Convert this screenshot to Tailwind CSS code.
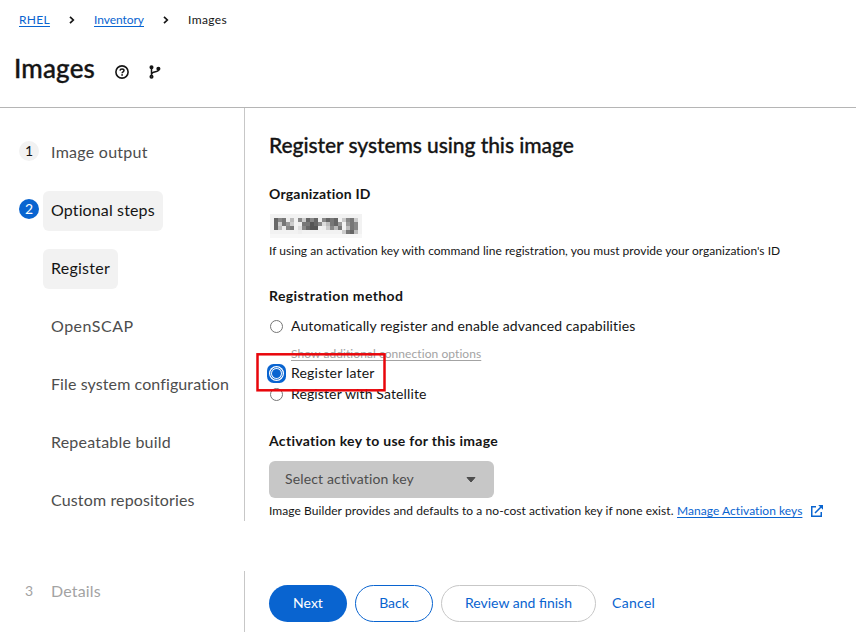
<!DOCTYPE html>
<html lang="en">
<head>
<meta charset="utf-8">
<title>Images</title>
<script src="https://cdn.jsdelivr.net/npm/@tailwindcss/browser@4"></script>
</head>
<body class="flex h-[632px] w-[856px] flex-col overflow-hidden bg-white font-['Lato','Open_Sans',sans-serif] text-[14px] text-[#151515]">
<header class="h-[108px] shrink-0 border-b border-[#b5b5b5]">
  <nav class="flex h-[40px] items-center pl-[19px] text-[12px] leading-[18px] whitespace-nowrap">
    <a class="w-[31px] tracking-[0.3px] text-[#0964d0] underline underline-offset-2">RHEL</a>
    <svg class="ml-[19px] h-[8px] w-[6px]" viewBox="0 0 6 8" fill="none" stroke="#151515" stroke-width="1.7"><path d="M1 .8 4.3 4 1 7.2"/></svg>
    <a class="ml-[19px] w-[50px] tracking-[-0.05px] text-[#0964d0] underline underline-offset-2">Inventory</a>
    <svg class="ml-[19px] h-[8px] w-[6px]" viewBox="0 0 6 8" fill="none" stroke="#151515" stroke-width="1.7"><path d="M1 .8 4.3 4 1 7.2"/></svg>
    <span class="ml-[19px] tracking-[0.4px]">Images</span>
  </nav>
  <div class="flex h-[60px] items-center pl-[14px]">
    <h1 class="w-[101px] pb-[4px] text-[26px] leading-[32px] font-medium tracking-[0.15px] [-webkit-text-stroke:0.35px_#151515]">Images</h1>
    <svg class="mt-[4px] h-[14px] w-[14px]" viewBox="0 0 14 14" fill="none" stroke="#151515"><circle cx="7" cy="7" r="6.1" stroke-width="1.6"/><path d="M5 5.6C5.1 4.5 5.9 4 7 4s2 .6 2 1.6C9 6.900 7.100 6.800 7.100 8.200" stroke-width="1.5"/><circle cx="7.100" cy="9.900" r=".9" fill="#151515" stroke="none"/></svg>
    <svg class="mt-[4px] ml-[20px] h-[14px] w-[12px]" viewBox="0 0 12 14" fill="none" stroke="#151515" stroke-width="1.5"><path d="M2.500 2.500v9M9.500 4v1c0 2.500-7 1-7 4.500"/><circle cx="2.500" cy="2.300" r="1.300" fill="#151515"/><circle cx="2.500" cy="11.700" r="1.300" fill="#555"/><circle cx="9.400" cy="3.800" r="1.300" fill="#151515"/></svg>
  </div>
</header>
<div class="flex h-[413px] shrink-0">
  <aside class="w-[245px] shrink-0 border-r border-[#c7c7c7] pt-[25px] pl-[19px] text-[16px] text-[#4d4d4d] whitespace-nowrap">
    <div class="mb-[18px] flex h-[40px]">
      <span class="mt-[8px] h-[20px] w-[20px] rounded-full bg-[#f2f2f2] text-center text-[14px] leading-[19px] text-[#151515]">1</span>
      <span class="ml-[4px] px-[8px] leading-[38px] tracking-[0.27px]">Image output</span>
    </div>
    <div class="mb-[18px] flex h-[40px]">
      <span class="mt-[8px] h-[20px] w-[20px] rounded-full bg-[#0964d0] text-center text-[14px] leading-[19px] text-white">2</span>
      <span class="ml-[4px] w-[120px] rounded-[6px] bg-[#f2f2f2] px-[8px] leading-[38px] tracking-[0.13px] text-[#151515]">Optional steps</span>
    </div>
    <div class="ml-[24px] flex flex-col items-start gap-[18px] leading-[38px]">
      <span class="h-[40px] w-[75px] rounded-[6px] bg-[#f2f2f2] px-[8px] tracking-[0.25px] text-[#151515]">Register</span>
      <span class="h-[40px] px-[8px] tracking-[0.5px]">OpenSCAP</span>
      <span class="h-[40px] px-[8px] tracking-[0.1px]">File system configuration</span>
      <span class="h-[40px] px-[8px] tracking-[0.2px]">Repeatable build</span>
      <span class="h-[40px] px-[8px] tracking-[0.14px]">Custom repositories</span>
    </div>
  </aside>
  <main class="flex flex-col pt-[24px] pl-[24px] whitespace-nowrap">
    <h2 class="h-[26px] text-[21px] leading-[25px] font-medium tracking-[-0.07px] [-webkit-text-stroke:0.3px_#151515]">Register systems using this image</h2>
    <h3 class="mt-[26px] h-[21px] leading-[19px] font-bold tracking-[0.2px]">Organization ID</h3>
    <svg id="mosaic" class="mt-[9px] ml-[1px] h-[24px] w-[92px]" viewBox="0 0 92 24" shape-rendering="crispEdges"><rect width="92" height="24" fill="#f7f7f7"/><rect width="92" height="20" fill="#f2f2f2"/></svg>
    <p class="mt-[4px] h-[18px] text-[12px] leading-[18px] tracking-[0.025px]">If using an activation key with command line registration, you must provide your organization's ID</p>
    <h3 class="mt-[26px] h-[21px] leading-[19px] font-bold tracking-[0.4px]">Registration method</h3>
    <div class="mt-[9px] flex h-[21px] items-center">
      <span class="ml-[1px] h-[13px] w-[13px] rounded-full border border-[#767676] bg-white"></span>
      <span class="ml-[8px] h-[21px] leading-[19px] tracking-[0.12px]">Automatically register and enable advanced capabilities</span>
    </div>
    <a class="mt-[8px] ml-[22px] h-[18px] text-[12px] leading-[18px] tracking-[0.07px] text-[#a3a3a3] underline underline-offset-2">Show additional connection options</a>
    <div class="relative flex h-[21px] items-center">
      <svg class="ml-[-2px] h-[19px] w-[19px]" viewBox="0 0 19 19"><rect width="19" height="19" rx="6.500" fill="#0964d0"/><circle cx="9.500" cy="9.500" r="7.500" fill="#fff"/><circle cx="9.500" cy="9.500" r="5.900" fill="#fff" stroke="#0964d0" stroke-width=".9"/><circle cx="9.500" cy="9.500" r="4.500" fill="#0964d0"/></svg>
      <span class="ml-[5px] h-[21px] leading-[19px] tracking-[0.2px]">Register later</span>
      <svg class="absolute top-[-10px] left-[-13px] z-10 h-[39px] w-[130px]" viewBox="0 0 130 39"><rect x="1.500" y="1.300" width="127" height="36" fill="none" stroke="#e8060b" stroke-width="2.500"/></svg>
    </div>
    <div class="flex h-[21px] items-center">
      <span class="ml-[1px] h-[13px] w-[13px] rounded-full border border-[#767676] bg-white"></span>
      <span class="ml-[8px] h-[21px] leading-[19px] tracking-[0.12px]">Register with Satellite</span>
    </div>
    <h3 class="mt-[26px] h-[21px] leading-[19px] font-bold tracking-[0.3px]">Activation key to use for this image</h3>
    <button class="mt-[9px] flex h-[37px] w-[225px] items-center justify-between rounded-[6px] bg-[#c7c7c7] pr-[18px] pl-[16px] tracking-[0.15px] text-[#4d4d4d]"><span class="pb-[2px]">Select activation key</span><svg class="h-[6px] w-[10px]" viewBox="0 0 10 6"><path d="M1 .5h8L5 5Z" fill="#4d4d4d" stroke="#4d4d4d" stroke-linejoin="round"/></svg></button>
    <p class="mt-[4px] flex h-[18px] items-center text-[12px] leading-[18px]"><span class="w-[408px] tracking-[0.07px]">Image Builder provides and defaults to a no-cost activation key if none exist.</span><a class="w-[126px] tracking-[0.04px] text-[#0964d0] underline underline-offset-2">Manage Activation keys</a>
      <svg class="ml-[8px] h-[12px] w-[12px]" viewBox="0 0 12 12" fill="none" stroke="#0964d0" stroke-width="1.500"><path d="M5 1.750H.75v9.500h9.500V7M4 8 10.500 1.500"/><path d="M7.200 0H12v4.800Z" fill="#0964d0" stroke="none"/></svg></p>
  </main>
</div>
<footer class="mt-[50px] flex h-[61px] shrink-0">
  <div class="flex w-[245px] shrink-0 border-r border-[#c7c7c7] pl-[19px] text-[#a3a3a3]">
    <span class="mt-[10px] w-[20px] text-center leading-[19px]">3</span>
    <span class="ml-[12px] text-[16px] leading-[40px] tracking-[0.15px]">Details</span>
  </div>
  <div class="flex pt-[14px] pl-[24px] whitespace-nowrap text-[#0964d0]">
    <button class="h-[37px] w-[78px] rounded-full bg-[#0964d0] pb-[2px] text-white">Next</button>
    <button class="ml-[8px] h-[37px] w-[78px] rounded-full border border-[#0964d0] pb-[2px]">Back</button>
    <button class="ml-[8px] h-[37px] w-[155px] rounded-full border border-[#c7c7c7] pb-[2px]">Review and finish</button>
    <button class="ml-[16px] h-[37px] pb-[2px] tracking-[0.3px]">Cancel</button>
  </div>
</footer>
<script>
// Pixelated organization ID: each hex digit is the grey level of one 4px cell.
const rows = [
  "687eb.8c686e8676.c87c",
  "6c79c.e77568db769.978b",
  "6be87.d8655.ec8b7.b78b",
  "......e..........c76b"
];
const svg = document.getElementById("mosaic");
rows.forEach((row, y) => [...row].forEach((level, x) => {
  if (level === "." || x > 20) return;
  const cell = document.createElementNS("http://www.w3.org/2000/svg", "rect");
  cell.setAttribute("x", 4 + x * 4);
  cell.setAttribute("y", 4 + y * 4);
  cell.setAttribute("width", 4);
  cell.setAttribute("height", 4);
  cell.setAttribute("fill", "#" + level.repeat(3));
  svg.append(cell);
}));
</script>
</body>
</html>
